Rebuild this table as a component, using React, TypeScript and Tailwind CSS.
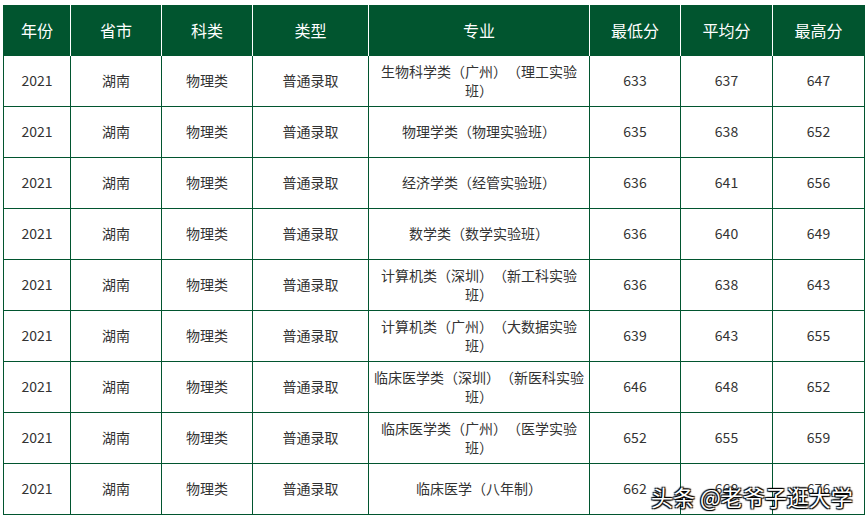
const rows = [
  ["生物科学类（广州）（理工实验班）", "633", "637", "647"],
  ["物理学类（物理实验班）", "635", "638", "652"],
  ["经济学类（经管实验班）", "636", "641", "656"],
  ["数学类（数学实验班）", "636", "640", "649"],
  ["计算机类（深圳）（新工科实验班）", "636", "638", "643"],
  ["计算机类（广州）（大数据实验班）", "639", "643", "655"],
  ["临床医学类（深圳）（新医科实验班）", "646", "648", "652"],
  ["临床医学类（广州）（医学实验班）", "652", "655", "659"],
  ["临床医学（八年制）", "662", "668", "676"],
];

const headers = ["年份", "省市", "科类", "类型", "专业", "最低分", "平均分", "最高分"];
const widths = [67, 91, 91, 116, 221, 91, 92, 92];

export default function App() {
  return (
    <div
      className="relative w-[868px] h-[522px] bg-white overflow-hidden pt-[5px] pl-[3px] [text-spacing-trim:space-all]"
      style={{ fontFamily: '"Noto Sans CJK SC", "Noto Sans", sans-serif' }}
    >
      <table className="table-fixed border-collapse w-[861px]">
        <colgroup>
          {widths.map((w, i) => (
            <col key={i} style={{ width: w }} />
          ))}
        </colgroup>
        <thead>
          <tr className="h-[50px] bg-[#01552f]">
            {headers.map((h, i) => (
              <th
                key={h}
                className={`text-white text-[16px] font-normal text-center border-x border-white ${i === 0 ? "border-l-[#01552f]" : ""} ${i === 7 ? "border-r-[#01552f]" : ""}`}
              >
                {h}
              </th>
            ))}
          </tr>
        </thead>
        <tbody>
          {rows.map((r, i) => (
            <tr key={i} className="h-[51px]">
              {["2021", "湖南", "物理类", "普通录取", ...r].map((c, j) => (
                <td
                  key={j}
                  className={`border border-[#01552f] text-center text-[14px] leading-[19px] text-[#333333] ${j === 4 ? "px-[4px]" : "px-1"}`}
                >
                  {c}
                </td>
              ))}
            </tr>
          ))}
        </tbody>
      </table>
      <div
        className="absolute left-[651px] top-[480px] text-[22px] text-white whitespace-nowrap"
        style={{ textShadow: "1px 1px 1px #000, -1px -1px 1px #000, 1px -1px 1px #000, -1px 1px 1px #000" }}
      >
        头条 @老爷子逛大学
      </div>
    </div>
  );
}
